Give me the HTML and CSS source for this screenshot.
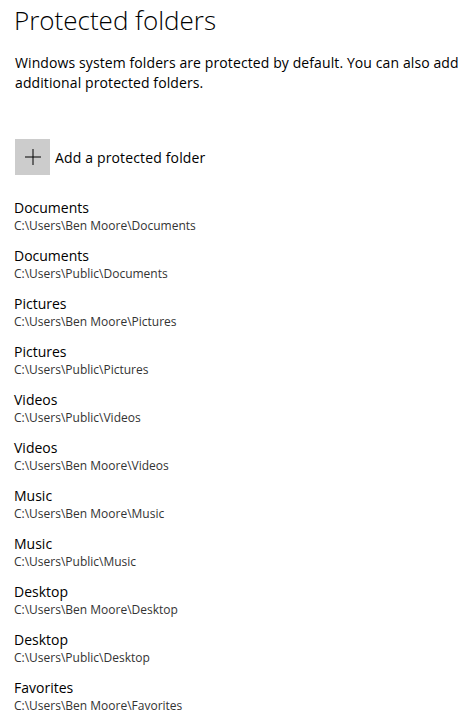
FILE: index.html
```html
<!DOCTYPE html>
<html>
<head>
<meta charset="utf-8">
<link rel="stylesheet" href="styles.css">
</head>
<body>
<main class="page">
  <h1 class="title">Protected folders</h1>
  <p class="desc">Windows system folders are protected by default. You can also add additional protected folders.</p>
  <div class="add-row">
    <span class="add-btn">
      <svg width="16" height="16" viewBox="0 0 16 16"><path d="M8 0V16M0 8H16" stroke="#000" stroke-width="1" fill="none"/></svg>
    </span>
    <span class="add-label">Add a protected folder</span>
  </div>
  <ul class="folders">
    <li class="folder"><span class="name">Documents</span><span class="path">C:\Users\Ben Moore\Documents</span></li>
    <li class="folder"><span class="name">Documents</span><span class="path">C:\Users\Public\Documents</span></li>
    <li class="folder"><span class="name">Pictures</span><span class="path">C:\Users\Ben Moore\Pictures</span></li>
    <li class="folder"><span class="name">Pictures</span><span class="path">C:\Users\Public\Pictures</span></li>
    <li class="folder"><span class="name">Videos</span><span class="path">C:\Users\Public\Videos</span></li>
    <li class="folder"><span class="name">Videos</span><span class="path">C:\Users\Ben Moore\Videos</span></li>
    <li class="folder"><span class="name">Music</span><span class="path">C:\Users\Ben Moore\Music</span></li>
    <li class="folder"><span class="name">Music</span><span class="path">C:\Users\Public\Music</span></li>
    <li class="folder"><span class="name">Desktop</span><span class="path">C:\Users\Ben Moore\Desktop</span></li>
    <li class="folder"><span class="name">Desktop</span><span class="path">C:\Users\Public\Desktop</span></li>
    <li class="folder"><span class="name">Favorites</span><span class="path">C:\Users\Ben Moore\Favorites</span></li>
  </ul>
</main>
</body>
</html>
```

FILE: styles.css
```css
html, body {
  margin: 0;
  padding: 0;
  background: #ffffff;
}
body {
  font-family: "Open Sans", "Noto Sans", sans-serif;
  color: #000;
}
.page {
  padding: 0 0 0 14px;
}
.title {
  margin: 0;
  padding-top: 3px;
  font-size: 26px;
  font-weight: 300;
  line-height: 34px;
  height: 34px;
}
.desc {
  margin: 16px 0 0 1px;
  font-size: 14px;
  line-height: 20px;
  width: 450px;
  letter-spacing: 0.1px;
  color: #000;
}
.add-row {
  display: flex;
  align-items: center;
  gap: 5px;
  margin: 46px 0 0 1px;
  height: 36px;
}
.add-btn {
  width: 35px;
  height: 36px;
  background: #cccccc;
  display: flex;
  align-items: center;
  justify-content: center;
}
.add-label {
  font-size: 14px;
  letter-spacing: 0.15px;
}
.folders {
  list-style: none;
  margin: 23px 0 0 0;
  padding: 0;
}
.folder {
  display: flex;
  flex-direction: column;
  height: 48px;
}
.name {
  font-size: 14px;
  line-height: 20px;
}
.path {
  font-size: 12px;
  line-height: 16px;
  color: #333;
}
```
